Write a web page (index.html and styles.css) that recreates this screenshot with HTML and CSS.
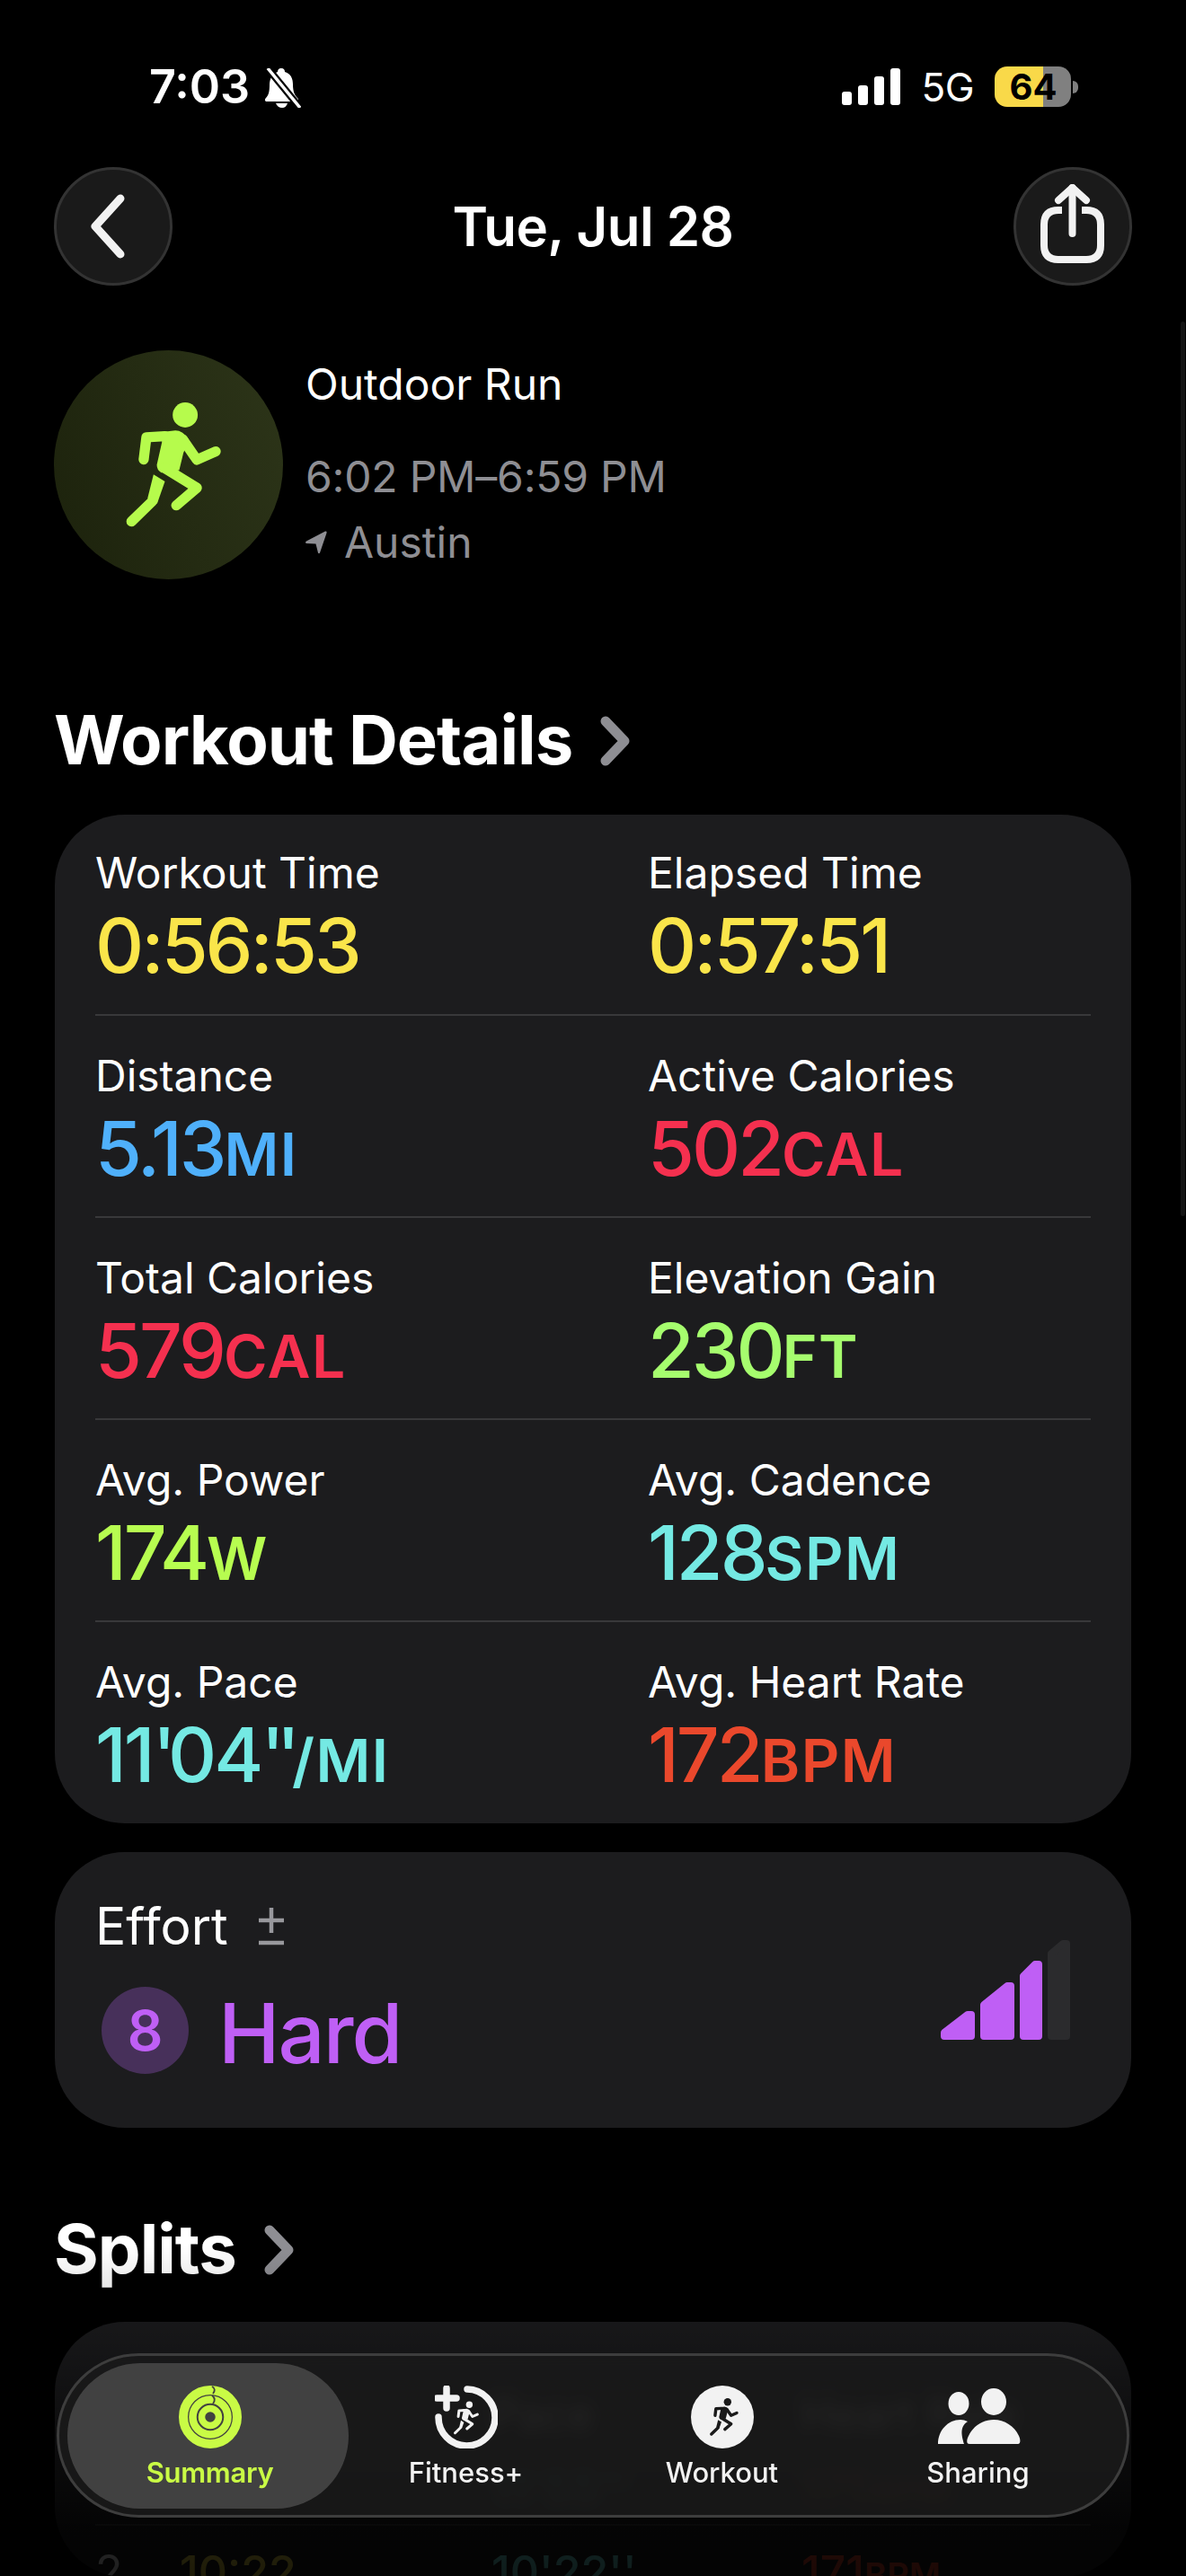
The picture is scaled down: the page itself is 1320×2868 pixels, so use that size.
FILE: index.html
```html
<!DOCTYPE html>
<html lang="en">

<head>
    <meta charset="UTF-8">
    <meta name="viewport" content="width=device-width, initial-scale=1.0">
    <title>Workout Summary</title>
    <link rel="stylesheet" href="styles.css">
</head>

<body>
    <!-- shared runner glyph -->
    <svg class="defs" width="0" height="0">
        <symbol id="runner" viewBox="290 190 340 440">
            <circle cx="498" cy="243" r="42" fill="currentColor" />
            <path fill="currentColor" d="M420 335L403 410Q403 428 418 436L478 428L492 370L510 325Q490 295 465 295L420 300Z" />
            <path fill="currentColor" d="M392 442L430 466L404 540L372 522Z" />
            <g fill="none" stroke="currentColor" stroke-width="34" stroke-linecap="round" stroke-linejoin="round">
                <path d="M359 392L368 318L430 314" />
                <path d="M490 325L537 393L600 365" />
                <path d="M428 420L537 487L468 546" />
                <path d="M318 600L388 532" />
            </g>
        </symbol>
    </svg>

    <header class="status">
        <div class="status-left">
            <span class="clock">7:03</span>
            <svg class="bell" viewBox="0 0 43 44">
                <path fill="#fff" d="M21 0c3 0 4 2 4 4 7 2 9 8 9 14 0 8 2 12 5 15 2 2 1 4-1 4H5c-2 0-3-2-1-4 3-3 4-7 4-15 0-6 3-12 9-14 0-2 1-4 4-4zM15 39h13c-1 3-3 5-6 5s-6-2-7-5z" />
                <path stroke="#000" stroke-width="8" d="M6 0L42 44" />
                <path stroke="#fff" stroke-width="3.5" d="M6 0L42 44" />
            </svg>
        </div>
        <div class="status-right">
            <div class="signal">
                <i class="s1"></i><i class="s2"></i><i class="s3"></i><i class="s4"></i>
            </div>
            <span class="net">5G</span>
            <div class="battery"><span>64</span></div>
            <div class="battery-tip"></div>
        </div>
    </header>

    <nav class="topbar">
        <button class="round-btn">
            <svg class="back-icon" width="38" height="72" viewBox="0 0 38 72">
                <path d="M33 5L5 36L33 67" fill="none" stroke="#f2f2f2" stroke-width="9" stroke-linecap="round" stroke-linejoin="round" />
            </svg>
        </button>
        <h1>Tue, Jul 28</h1>
        <button class="round-btn">
            <svg class="share-icon" width="71" height="88" viewBox="0 0 71 88">
                <g fill="none" stroke="#f2f2f2" stroke-width="8" stroke-linejoin="round">
                    <path d="M24 29H20Q4 29 4 45V68Q4 84 20 84H51Q67 84 67 68V45Q67 29 51 29H46" />
                    <path d="M35.500 4V55" stroke-linecap="round" />
                    <path d="M20 18L35.500 4L51 18" stroke-linecap="round" />
                </g>
            </svg>
        </button>
    </nav>

    <section class="hero">
        <div class="hero-icon">
            <svg class="hero-runner">
                <use href="#runner" />
            </svg>
        </div>
        <div class="hero-text">
            <div class="hero-name">Outdoor Run</div>
            <div class="hero-sub hero-time">6:02 PM–6:59 PM</div>
            <div class="hero-sub hero-place">
                <svg width="24" height="26" viewBox="0 0 24 26">
                    <path fill="#8e8e93" d="M22 0.500Q24 0 23.500 2.500L16 24.500Q15 26 14 24.500L11.500 14.500L1 14Q-1 13 1 11.500Z" />
                </svg>
                Austin
            </div>
        </div>
    </section>

    <h2 class="section-title first">
        Workout Details
        <svg class="chev" viewBox="0 0 33 56">
            <path d="M6 6L27 28L6 50" fill="none" stroke="#8e8e93" stroke-width="11" stroke-linecap="round" stroke-linejoin="round" />
        </svg>
    </h2>

    <section class="card metrics">
        <div class="metric-row">
            <div class="metric">
                <div class="metric-label">Workout Time</div>
                <div class="metric-value yellow">0:56:53</div>
            </div>
            <div class="metric">
                <div class="metric-label">Elapsed Time</div>
                <div class="metric-value yellow">0:57:51</div>
            </div>
        </div>
        <div class="metric-row">
            <div class="metric">
                <div class="metric-label">Distance</div>
                <div class="metric-value blue">5.13<span class="unit">MI</span></div>
            </div>
            <div class="metric">
                <div class="metric-label">Active Calories</div>
                <div class="metric-value pink">502<span class="unit">CAL</span></div>
            </div>
        </div>
        <div class="metric-row">
            <div class="metric">
                <div class="metric-label">Total Calories</div>
                <div class="metric-value pink">579<span class="unit">CAL</span></div>
            </div>
            <div class="metric">
                <div class="metric-label">Elevation Gain</div>
                <div class="metric-value green">230<span class="unit">FT</span></div>
            </div>
        </div>
        <div class="metric-row">
            <div class="metric">
                <div class="metric-label">Avg. Power</div>
                <div class="metric-value lime">174<span class="unit">W</span></div>
            </div>
            <div class="metric">
                <div class="metric-label">Avg. Cadence</div>
                <div class="metric-value cyan">128<span class="unit">SPM</span></div>
            </div>
        </div>
        <div class="metric-row">
            <div class="metric">
                <div class="metric-label">Avg. Pace</div>
                <div class="metric-value cyan">11<span class="tick">'</span>04<span class="tick">''</span><span class="unit">/MI</span></div>
            </div>
            <div class="metric">
                <div class="metric-label">Avg. Heart Rate</div>
                <div class="metric-value red">172<span class="unit">BPM</span></div>
            </div>
        </div>
    </section>

    <section class="card effort">
        <div class="effort-head">
            Effort
            <svg width="30" height="45" viewBox="0 0 30 45">
                <path d="M15 0V28M1 14H29M1 39H29" fill="none" stroke="#98989d" stroke-width="4.500" />
            </svg>
        </div>
        <div class="effort-body">
            <div class="effort-score">8</div>
            <div class="effort-word">Hard</div>
            <svg class="effort-bars" width="144" height="111" viewBox="0 0 144 111">
                <g fill="#bf5ff5" stroke="#bf5ff5" stroke-width="8" stroke-linejoin="round">
                    <path d="M4 107V103L30 83H34V107Z" />
                    <path d="M48 107V72L74 51H78V107Z" />
                    <path d="M92 107V40L105 27H109V107Z" />
                </g>
                <path d="M123 107V15L136 4H140V107Z" fill="#2b2b2d" stroke="#2b2b2d" stroke-width="8" stroke-linejoin="round" />
            </svg>
        </div>
    </section>

    <h2 class="section-title second">
        Splits
        <svg class="chev" viewBox="0 0 33 56">
            <path d="M6 6L27 28L6 50" fill="none" stroke="#8e8e93" stroke-width="11" stroke-linecap="round" stroke-linejoin="round" />
        </svg>
    </h2>

    <section class="card splits">
        <div class="split-row split-head">
            <span></span><span>Time</span><span>Pace</span><span>Heart Rate</span>
        </div>
        <div class="split-row split-data">
            <span class="split-num">1</span>
            <span class="yellow">11:55</span>
            <span class="cyan">11'55''</span>
            <span class="red">175<small>BPM</small></span>
        </div>
        <div class="split-row split-data">
            <span class="split-num">2</span>
            <span class="yellow">10:22</span>
            <span class="cyan">10'22''</span>
            <span class="red">171<small>BPM</small></span>
        </div>
    </section>

    <!-- things lying over the scrolled content -->
    <div class="scroll-bar"></div>
    <div class="fade"></div>

    <nav class="tabbar">
        <div class="tab active">
            <svg class="tab-icon" viewBox="0 0 70 70">
                <g fill="none" stroke="#c9fb45">
                    <circle cx="35" cy="35" r="30" stroke-width="10" />
                    <circle cx="35" cy="35" r="19.500" stroke-width="8.500" />
                    <circle cx="35" cy="35" r="9.500" stroke-width="7.500" />
                </g>
                <path d="M37 1Q42 4 38 9M37 11Q42 15 38 20" fill="none" stroke="#404040" stroke-width="1.800" />
            </svg>
            <span>Summary</span>
        </div>
        <div class="tab">
            <svg class="tab-icon" viewBox="0 0 70 70">
                <path d="M36 4A31.500 31.500 0 1 1 4 35" fill="none" stroke="#f2f2f2" stroke-width="7.500" stroke-linecap="round" />
                <path d="M13 3V25M2 14H24" fill="none" stroke="#f2f2f2" stroke-width="7.500" stroke-linecap="round" />
                <svg x="20" y="16" width="30" height="40" color="#f2f2f2">
                    <use href="#runner" />
                </svg>
            </svg>
            <span>Fitness+</span>
        </div>
        <div class="tab">
            <svg class="tab-icon" viewBox="0 0 70 70">
                <circle cx="35" cy="35" r="35" fill="#f2f2f2" />
                <svg x="20" y="13" width="34" height="44" color="#1a1a1a">
                    <use href="#runner" />
                </svg>
            </svg>
            <span>Workout</span>
        </div>
        <div class="tab">
            <svg class="tab-icon people" viewBox="0 0 96 70">
                <g fill="#f2f2f2">
                    <ellipse cx="26" cy="20" rx="11.500" ry="13" />
                    <ellipse cx="65" cy="18" rx="14" ry="15" />
                    <path d="M3 65C3 50 14 38 28 38Q32 38 36 40C26 46 30 58 32 65Z" />
                    <path d="M38 65C34 65 35 60 37 56C42 45 53 38 65 38S88 45 93 56C95 60 95 65 92 65Z" />
                </g>
            </svg>
            <span>Sharing</span>
        </div>
    </nav>
</body>

</html>
```

FILE: styles.css
```css
/* page */
body {
    position: relative;
    width: 1320px;
    height: 2868px;
    margin: 0;
    overflow: hidden;
    background-color: black;
    color: white;
    font-family: Inter, "Noto Sans", sans-serif;
}

.defs {
    position: absolute;
}

/* status bar */
.status {
    display: flex;
    justify-content: space-between;
    height: 186px;
    padding: 0 120px 0 166px;
    box-sizing: border-box;
}

.status-left {
    display: flex;
    align-items: flex-start;
    padding-top: 66px;
}

.clock {
    font-size: 52px;
    font-weight: 600;
    line-height: 62px;
}

.bell {
    width: 43px;
    height: 44px;
    margin: 10px 0 0 14px;
}

.status-right {
    display: flex;
    align-items: flex-start;
    padding-top: 74px;
}

.signal {
    display: flex;
    align-items: flex-end;
    gap: 7px;
    height: 43px;
}

.signal i {
    width: 11px;
    background-color: white;
    border-radius: 3px;
}

.s1 { height: 15px; }
.s2 { height: 22px; }
.s3 { height: 32px; }
.s4 { height: 41px; }

.net {
    margin-left: 23px;
    font-size: 44px;
    font-weight: 400;
    line-height: 46px;
    letter-spacing: -0.5px;
}

.battery {
    display: flex;
    justify-content: center;
    align-items: center;
    width: 85px;
    height: 45px;
    margin-left: 23px;
    border-radius: 14px;
    background: linear-gradient(to right, #f9d949 54px, #808080 54px);
    color: black;
    font-size: 40px;
    font-weight: 700;
}

.battery span {
    margin-left: 1px;
}

.battery-tip {
    width: 6px;
    height: 14px;
    margin: 16px 0 0 2px;
    border-radius: 0 6px 6px 0;
    background-color: #808080;
}

/* top buttons */
.topbar {
    display: flex;
    justify-content: space-between;
    align-items: center;
    height: 132px;
    padding: 0 60px;
}

.round-btn {
    display: flex;
    justify-content: center;
    align-items: center;
    width: 132px;
    height: 132px;
    padding: 0;
    border: 3px solid #333;
    border-radius: 50%;
    background-color: #1a1a1a;
}

.back-icon {
    margin-right: 12px;
}

.share-icon {
    margin-bottom: 6px;
}

.topbar h1 {
    margin: 0;
    font-size: 60px;
    font-weight: 600;
    letter-spacing: -0.5px;
}

/* workout heading */
.hero {
    display: flex;
    gap: 25px;
    height: 255px;
    margin: 72px 60px 0;
}

.hero-icon {
    display: flex;
    justify-content: center;
    align-items: center;
    flex: none;
    width: 255px;
    height: 255px;
    border-radius: 50%;
    background: linear-gradient(70deg, #1c220c, #2d3519);
    color: #b6fb4c;
}

.hero-runner {
    width: 113px;
    height: 147px;
    margin-left: 12px;
}

.hero-text {
    padding-top: 8px;
}

.hero-name {
    font-size: 48px;
    line-height: 60px;
}

.hero-sub {
    color: #8e8e93;
    font-size: 48px;
    line-height: 60px;
}

.hero-time {
    margin-top: 43px;
    letter-spacing: -0.2px;
}

.hero-place {
    display: flex;
    align-items: center;
    gap: 19px;
    margin-top: 13px;
}

/* section headings */
.section-title {
    display: flex;
    align-items: center;
    gap: 31px;
    height: 90px;
    margin: 0 0 0 60px;
    font-size: 76px;
    font-weight: 700;
    line-height: 90px;
    letter-spacing: -1px;
}

.section-title.first {
    margin-top: 133px;
}

.section-title.second {
    margin-top: 89px;
}

.chev {
    width: 33px;
    height: 56px;
    margin-top: 4px;
}

/* cards */
.card {
    margin: 0 61px;
    border-radius: 78px;
    background-color: #1c1c1e;
}

.metrics {
    margin-top: 39px;
    padding: 0 45px;
}

.metric-row {
    display: grid;
    grid-template-columns: 615px 1fr;
    height: 225px;
    padding-top: 37px;
    box-sizing: border-box;
    border-bottom: 2px solid #38383a;
}

.metric-row:first-child {
    height: 224px;
    padding-top: 35px;
}

.metric-row:last-child {
    height: 224px;
    border-bottom: none;
}

.metric-label {
    font-size: 48px;
    line-height: 60px;
}

.metric-value {
    margin-top: 6px;
    font-size: 84px;
    font-weight: 500;
    line-height: 90px;
    letter-spacing: -3px;
}

.unit {
    font-size: 66px;
    font-weight: 600;
    letter-spacing: 1.500px;
}

.tick {
    letter-spacing: -9px;
}

.yellow { color: #fae54a; }
.blue { color: #4fb0fb; }
.pink { color: #f5304f; }
.green { color: #a6fd6e; }
.lime { color: #b7fd50; }
.cyan { color: #74e9e3; }
.red { color: #ea482c; }

/* effort */
.effort {
    height: 307px;
    margin-top: 32px;
    padding: 0 45px;
    box-sizing: border-box;
}

.effort-head {
    display: flex;
    align-items: center;
    gap: 33px;
    height: 70px;
    padding-top: 47px;
    font-size: 57px;
}

.effort-head svg {
    margin-top: 4px;
}

.effort-body {
    display: flex;
    align-items: center;
    margin-top: 23px;
    padding-left: 7px;
}

.effort-score {
    display: flex;
    justify-content: center;
    align-items: center;
    flex: none;
    width: 97px;
    height: 97px;
    border-radius: 50%;
    background-color: #47305a;
    color: #bf5ff5;
    font-size: 62px;
    font-weight: 600;
}

.effort-word {
    margin: 6px 0 0 33px;
    color: #bf5ff5;
    font-size: 92px;
    font-weight: 500;
    letter-spacing: -2px;
}

.effort-bars {
    margin: -90px 23px 0 auto;
}

/* splits */
.splits {
    height: 284px;
    margin-top: 37px;
    padding: 74px 45px 0;
    box-sizing: border-box;
    overflow: hidden;
}

.split-row {
    display: grid;
    grid-template-columns: 94px 347px 345px 1fr;
}

.split-head {
    font-size: 48px;
    line-height: 60px;
}

.split-data {
    height: 93px;
    padding-top: 21px;
    box-sizing: border-box;
    border-bottom: 2px solid #38383a;
    font-size: 50px;
    font-weight: 500;
    line-height: 60px;
}

.split-data small {
    font-size: 38px;
    font-weight: 600;
}

.split-num {
    font-weight: 400;
}

/* overlays */
.scroll-bar {
    position: absolute;
    top: 358px;
    right: 1px;
    width: 5px;
    height: 996px;
    border-radius: 3px;
    background-color: #141414;
}

.fade {
    position: absolute;
    left: 0;
    right: 0;
    bottom: 0;
    height: 368px;
    background: linear-gradient(to bottom, rgba(0, 0, 0, 0), rgba(0, 0, 0, 0.2) 27%, rgba(0, 0, 0, 0.85) 85%, rgba(0, 0, 0, 0.88));
}

.tabbar {
    position: absolute;
    top: 2620px;
    left: 63px;
    display: flex;
    width: 1194px;
    height: 183px;
    padding-left: 25px;
    box-sizing: border-box;
    border: 3px solid #3d3d3d;
    border-radius: 92px;
    background-color: rgba(26, 26, 26, 0.9);
    backdrop-filter: blur(8px);
}

.tab {
    position: relative;
    display: flex;
    flex-direction: column;
    align-items: center;
    width: 285px;
    padding-top: 33px;
    color: #f2f2f2;
    font-size: 31px;
    font-weight: 500;
}

.tab.active {
    color: #c9fb45;
    font-weight: 600;
    letter-spacing: -0.3px;
}

.tab.active::before {
    content: "";
    position: absolute;
    top: 8px;
    left: -16px;
    width: 313px;
    height: 162px;
    border-radius: 81px;
    background-color: rgba(72, 72, 72, 0.88);
}

.tab-icon {
    position: relative;
    width: 70px;
    height: 70px;
}

.tab-icon.people {
    width: 96px;
}

.tab span {
    position: relative;
    margin-top: 7px;
    line-height: 40px;
}
```
